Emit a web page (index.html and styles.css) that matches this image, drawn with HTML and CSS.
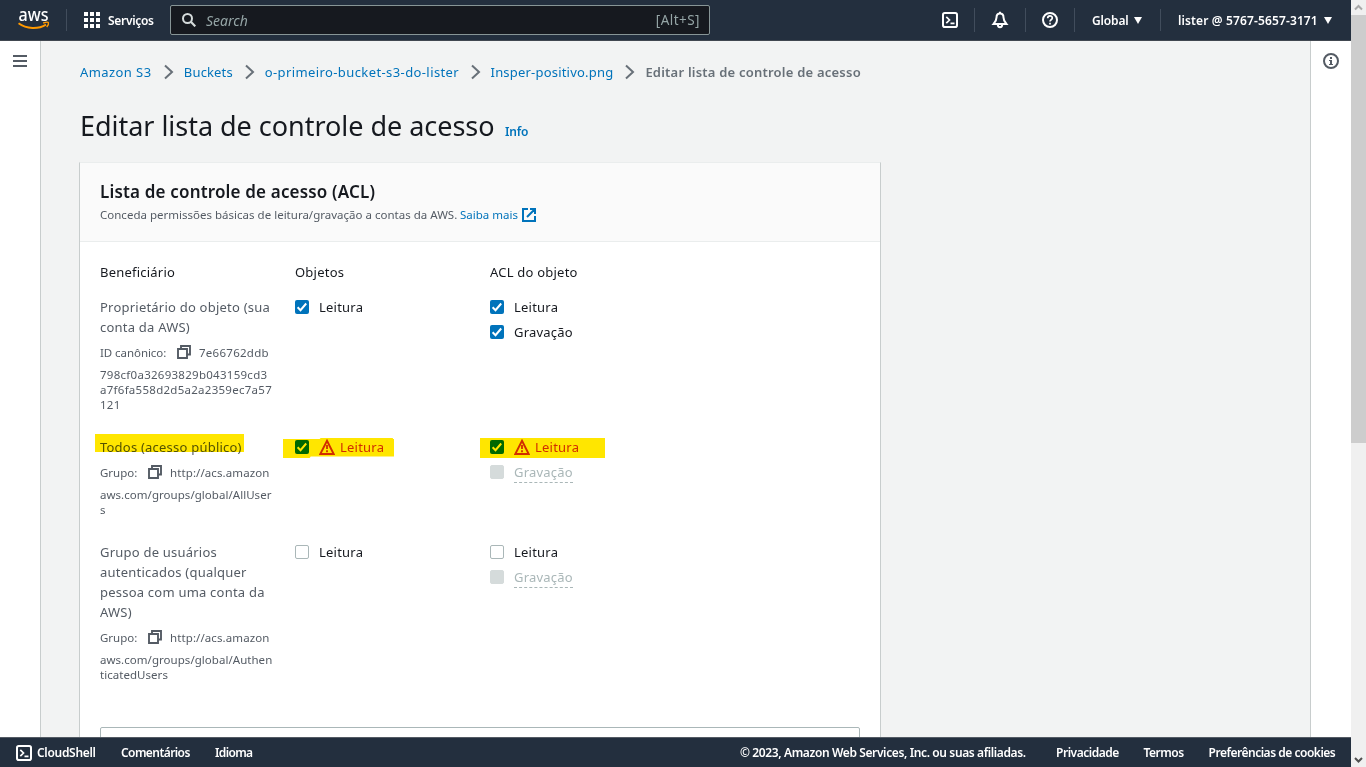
FILE: index.html
```html
<!DOCTYPE html>
<html lang="pt-BR">
<head>
<meta charset="utf-8">
<title>Editar lista de controle de acesso</title>
<link rel="stylesheet" href="styles.css">
</head>
<body>
<svg class="defs" width="0" height="0">
  <symbol id="copy" viewBox="0 0 14 14"><path d="M1 4h9v9H1zM4 4V1h9v8.500h-3" fill="none" stroke="currentColor" stroke-width="1.900"/></symbol>
  <symbol id="check" viewBox="0 0 14 14"><path d="M2.600 7.300l2.900 2.900L11.200 3.500" fill="none" stroke="currentColor" stroke-width="2"/></symbol>
  <symbol id="warn" viewBox="0 0 16 16"><path d="M8 1.800L14.700 15H1.300z" fill="none" stroke="currentColor" stroke-width="1.900"/><path d="M8 6v4M8 11.300v2" stroke="currentColor" stroke-width="1.800"/></symbol>
  <symbol id="chev" viewBox="0 0 10 16"><path d="M1 1.500L8 8 1 14.500" fill="none" stroke="currentColor" stroke-width="2"/></symbol>
  <symbol id="shell" viewBox="0 0 16 16"><rect x="1" y="1" width="14" height="14" rx="1.800" fill="none" stroke="currentColor" stroke-width="2"/><path d="M4.300 4.800L7.500 8l-3.200 3.200M8.500 11.300h4" fill="none" stroke="currentColor" stroke-width="1.700"/></symbol>
</svg>
<div class="window">
  <div class="console">
    <header class="topbar">
      <svg class="logo" viewBox="0 0 32 40"><text x="0.500" y="21" textLength="30" lengthAdjust="spacingAndGlyphs" class="logo-text">aws</text><path d="M.500 23.300c8 6 20 6 27.500 1.300" fill="none" stroke="#f90" stroke-width="1.900"/><path d="M25.200 23c3-.9 5-.8 5.200-.2.300.9-.400 2.800-1.700 4.200" fill="none" stroke="#f90" stroke-width="1.400"/></svg>
      <span class="divider d1"></span>
      <svg class="grid-icon" viewBox="0 0 16 16"><path d="M0 0h4v4H0zM6 0h4v4H6zM12 0h4v4h-4zM0 6h4v4H0zM6 6h4v4H6zM12 6h4v4h-4zM0 12h4v4H0zM6 12h4v4H6zM12 12h4v4h-4z" fill="#fff"/></svg>
      <span class="services">Serviços</span>
      <div class="search">
        <svg class="search-icon" viewBox="0 0 14 14"><circle cx="5.500" cy="5.500" r="4.500" fill="none" stroke="#d5dbdb" stroke-width="2"/><path d="M8.800 8.800L13.300 13.300" stroke="#d5dbdb" stroke-width="2.200"/></svg>
        <em class="search-text">Search</em><span class="shortcut">[Alt+S]</span>
      </div>
      <div class="tools">
        <svg class="tool"><use href="#shell"/></svg>
        <span class="divider"></span>
        <svg class="tool bell" viewBox="0 0 18 18"><path d="M9 2.500C6.500 2.500 5.500 4.500 5.500 6.500 5.500 9.500 4.500 10.500 2.500 13h13C13.500 10.500 12.500 9.500 12.500 6.500 12.500 4.500 11.500 2.500 9 2.500zM9 .800v1.700M6.800 13.500C6.800 17 11.200 17 11.200 13.500" fill="none" stroke="#fff" stroke-width="2"/></svg>
        <span class="divider"></span>
        <svg class="tool" viewBox="0 0 16 16"><circle cx="8" cy="8" r="7" fill="none" stroke="#fff" stroke-width="2"/><path d="M5.700 6.300C5.700 3 10.300 3.200 10.300 6 10.300 7.800 8 7.700 8 9.500M8 10.700v1.800" fill="none" stroke="#fff" stroke-width="1.700"/></svg>
        <span class="divider"></span>
      </div>
      <span class="region">Global</span><i class="caret"></i>
      <span class="divider d2"></span>
      <span class="account">lister @ 5767-5657-3171</span><i class="caret"></i>
    </header>
    <div class="workspace">
      <aside class="rail left"><svg class="menu" viewBox="0 0 14 12"><path d="M0 1h14M0 6h14M0 11h14" stroke="#545b64" stroke-width="2"/></svg></aside>
      <main class="content">
        <nav class="crumbs">
          <a class="c1">Amazon S3</a><svg class="sep"><use href="#chev"/></svg>
          <a class="c2">Buckets</a><svg class="sep"><use href="#chev"/></svg>
          <a class="c3">o-primeiro-bucket-s3-do-lister</a><svg class="sep"><use href="#chev"/></svg>
          <a class="c4">Insper-positivo.png</a><svg class="sep"><use href="#chev"/></svg>
          <b class="c5">Editar lista de controle de acesso</b>
        </nav>
        <div class="heading"><h1>Editar lista de controle de acesso</h1><a class="info">Info</a></div>
        <section class="card">
          <div class="card-head">
            <h2>Lista de controle de acesso (ACL)</h2>
            <p class="desc"><span class="desc-text">Conceda permissões básicas de leitura/gravação a contas da AWS.</span><a class="more">Saiba mais</a><svg class="ext" viewBox="0 0 14 14"><path d="M6 1H1v12h12V8M8 1h5v5M13 1L5 9" fill="none" stroke="#0073bb" stroke-width="2"/></svg></p>
          </div>
          <div class="card-body">
            <div class="row labels"><span>Beneficiário</span><span>Objetos</span><span>ACL do objeto</span></div>
            <div class="row">
              <div class="who"><div class="name">Proprietário do objeto (sua<br>conta da AWS)</div>
                <div class="copyline"><span class="canon">ID canônico:</span><svg class="copy"><use href="#copy"/></svg><span class="hex">7e66762ddb</span></div>
                <div class="rest hex">798cf0a32693829b043159cd3<br>a7f6fa558d2d5a2a2359ec7a57<br>121</div></div>
              <div class="perms"><label class="opt"><span class="box on"><svg><use href="#check"/></svg></span>Leitura</label></div>
              <div class="perms"><label class="opt"><span class="box on"><svg><use href="#check"/></svg></span>Leitura</label><label class="opt"><span class="box on"><svg><use href="#check"/></svg></span>Gravação</label></div>
            </div>
            <div class="row">
              <div class="who mark m1"><div class="name">Todos (acesso público)</div>
                <div class="copyline"><span class="group">Grupo:</span><svg class="copy"><use href="#copy"/></svg><span>http://acs.amazon</span></div>
                <div class="rest">aws.com/groups/global/AllUser<br>s</div></div>
              <div class="perms mark m2"><label class="opt danger"><span class="box on"><svg><use href="#check"/></svg></span><svg class="warn"><use href="#warn"/></svg>Leitura</label></div>
              <div class="perms mark m3"><label class="opt danger"><span class="box on"><svg><use href="#check"/></svg></span><svg class="warn"><use href="#warn"/></svg>Leitura</label><label class="opt off"><span class="box"></span><span class="hint">Gravação</span></label></div>
            </div>
            <div class="row">
              <div class="who"><div class="name">Grupo de usuários<br>autenticados (qualquer<br>pessoa com uma conta da<br>AWS)</div>
                <div class="copyline"><span class="group">Grupo:</span><svg class="copy"><use href="#copy"/></svg><span>http://acs.amazon</span></div>
                <div class="rest">aws.com/groups/global/Authen<br>ticatedUsers</div></div>
              <div class="perms"><label class="opt"><span class="box"></span>Leitura</label></div>
              <div class="perms"><label class="opt"><span class="box"></span>Leitura</label><label class="opt off"><span class="box"></span><span class="hint">Gravação</span></label></div>
            </div>
            <div class="alert"></div>
          </div>
        </section>
      </main>
      <aside class="rail right"><svg class="info-icon" viewBox="0 0 16 16"><circle cx="8" cy="8" r="7" fill="none" stroke="#545b64" stroke-width="2"/><path d="M7 4h2v2H7zM6 7h3v4h1v1H6v-1h1V8H6z" fill="#545b64"/></svg></aside>
    </div>
    <footer class="footer">
      <svg class="tool"><use href="#shell"/></svg><span class="f1">CloudShell</span><span class="f2">Comentários</span><span class="f3">Idioma</span>
      <span class="f4">© 2023, Amazon Web Services, Inc. ou suas afiliadas.</span><span class="f5">Privacidade</span><span class="f6">Termos</span><span class="f7">Preferências de cookies</span>
    </footer>
  </div>
  <div class="scrollbar"><svg class="arrow" viewBox="0 0 15 15"><path d="M4 9.500l3.500-3.500L11 9.500" fill="none" stroke="#a8a8a8" stroke-width="2"/></svg><div class="thumb"></div><svg class="arrow" viewBox="0 0 15 15"><path d="M4 6l3.500 3.500L11 6" fill="none" stroke="#505050" stroke-width="2"/></svg></div>
</div>
</body>
</html>
```
FILE: styles.css
```css
* { box-sizing: border-box; }
body { margin: 0; font-family: "Noto Sans", sans-serif; font-size: 13px; color: #16191f; }
svg { display: block; flex: none; }
a { color: #0073bb; }
.defs { position: absolute; }
.window { display: flex; width: 1366px; height: 767px; overflow: hidden; white-space: nowrap; }
.console { display: flex; flex-direction: column; width: 1351px; }

.topbar { display: flex; align-items: center; height: 41px; flex: none; padding-left: 18px; background: #232f3e; border-bottom: 1px solid #414750; color: #fff; font-size: 12px; font-weight: 600; }
.logo { width: 32px; height: 40px; }
.logo-text { font: 500 18px "Noto Sans", sans-serif; fill: #fff; }
.divider { width: 1px; height: 22px; background: #414d5c; flex: none; }
.d1 { margin: 0 17px 0 16px; }
.grid-icon { width: 16px; height: 16px; }
.services { width: 46px; margin: 0 16px 0 8px; letter-spacing: -.3px; }
.search { display: flex; align-items: center; width: 540px; height: 30px; padding: 0 9px 0 11px; background: #16191f; border: 1px solid #879596; border-radius: 2px; color: #95a5a6; font-size: 14px; font-weight: 400; }
.search-icon { width: 14px; height: 14px; }
.search-text { margin-left: 10px; }
.shortcut { margin-left: auto; font-size: 13.500px; letter-spacing: .45px; }
.tools { display: flex; align-items: center; gap: 16px; margin-left: 232px; }
.tools .divider { height: 24px; }
.tool { width: 16px; height: 16px; color: #fff; }
.bell { width: 18px; height: 18px; }
.region { margin-left: 17px; width: 36px; letter-spacing: -.15px; }
.caret { margin-left: 6px; border: 4px solid transparent; border-top: 7px solid #fff; border-bottom: 0; }
.d2 { margin: 0 17px 0 18px; }
.account { width: 140px; letter-spacing: .13px; }

.workspace { display: flex; flex: 1; min-height: 0; overflow: hidden; background: #f2f3f3; }
.rail { width: 41px; flex: none; background: #fff; }
.left { padding: 14px 13px; border-right: 1px solid #c8cdcd; }
.right { padding: 12px; border-left: 1px solid #c8cdcd; }
.menu { width: 14px; height: 12px; }
.info-icon { width: 16px; height: 16px; }
.content { flex: 1; padding: 21px 0 0 39px; overflow: hidden; }
.crumbs { display: flex; align-items: center; height: 20px; }
.crumbs a, .crumbs b { flex: none; }
.sep { width: 10px; height: 16px; margin: 0 10px 0 11.850px; color: #687078; }
.c1 { width: 72px; letter-spacing: .42px; }
.c2 { width: 49px; letter-spacing: .15px; }
.c3 { width: 194px; letter-spacing: .4px; }
.c4 { width: 123px; letter-spacing: .2px; }
.c5 { color: #687078; font-weight: 600; letter-spacing: .22px; }
.heading { display: flex; align-items: baseline; height: 40px; margin-top: 24px; }
h1 { width: 415px; margin: 0; font-size: 27px; font-weight: 400; line-height: 40px; letter-spacing: -.03px; }
.info { margin-left: 10px; font-size: 12px; font-weight: 600; letter-spacing: -.2px; }

.card { width: 802px; margin: 16px 0 0 -1px; background: #fff; border: 1px solid #c8cdcd; border-top-color: #eaeded; }
.card-head { height: 79px; padding: 17px 20px; background: #fafafa; border-bottom: 1px solid #eaeded; }
h2 { margin: 0; font-size: 17px; font-weight: 600; line-height: 24px; letter-spacing: .17px; }
.desc { display: flex; align-items: center; height: 20px; margin: 1px 0 0; color: #545b64; font-size: 11.500px; letter-spacing: .01px; }
.desc-text { width: 360px; padding-bottom: 2px; }
.more { width: 58px; padding-bottom: 2px; }
.ext { width: 14px; height: 14px; margin-left: 4px; }
.card-body { padding: 20px; letter-spacing: .22px; }
.row { display: grid; grid-template-columns: 195px 195px 195px; margin-bottom: 25px; line-height: 20px; }
.labels { margin-bottom: 15px; }
.name { color: #545b64; }
.copyline { display: flex; align-items: center; height: 30px; color: #545b64; font-size: 11.500px; letter-spacing: .1px; }
.copyline span { padding-top: 1px; }
.canon { width: 66px; letter-spacing: -.06px; }
.group { width: 37px; letter-spacing: 0; }
.copy { width: 14px; height: 14px; margin: 0 8px 0 11px; }
.rest { color: #545b64; font-size: 11.500px; line-height: 15px; letter-spacing: .04px; }
.hex { letter-spacing: .27px; }
.opt { display: flex; align-items: center; height: 20px; margin-bottom: 5px; }
.box { width: 14px; height: 14px; margin-right: 10px; border: 1px solid #aab7b8; border-radius: 2px; background: #fff; }
.box svg { width: 14px; height: 14px; }
.on { border: 0; background: #0073bb; color: #fff; }
.warn { width: 16px; height: 16px; margin-right: 5px; }
.danger { color: #d13212; }
.off { color: #aab7b8; }
.off .box { border-color: #d5dbdb; background: #d5dbdb; }
.hint { height: 21px; border-bottom: 1px dashed #aab7b8; }
.mark { position: relative; }
.mark::after { content: ""; position: absolute; background: #ffe600; mix-blend-mode: multiply; }
.m1::after { left: -5px; top: -3px; width: 149px; height: 18px; }
.m2::after { left: -12px; top: 1px; width: 111px; height: 20px; clip-path: polygon(0 5%, 33% 5%, 34% 0, 99% 0, 99% 5%, 100% 5%, 100% 92%, 25% 93%, 24% 100%, 0 100%); }
.m3::after { left: -10px; top: 1px; width: 125px; height: 20px; }
.alert { height: 80px; margin-top: 45px; border: 1px solid #aab7b8; border-radius: 2px; }

.footer { display: flex; align-items: center; height: 30px; flex: none; padding-left: 16px; background: #232f3e; border-top: 1px solid #545b64; color: #fff; font-size: 12px; font-weight: 600; letter-spacing: -.38px; }
.footer span { flex: none; }
.f1 { width: 59px; margin-left: 5px; letter-spacing: -.3px; }
.f2 { width: 69px; margin-left: 25px; letter-spacing: -.57px; }
.f3 { width: 38px; margin-left: 25px; letter-spacing: -.65px; }
.f4 { width: 286px; margin-left: 487px; }
.f5 { width: 63px; margin-left: 30px; letter-spacing: -.48px; }
.f6 { width: 40px; margin-left: 24.500px; letter-spacing: -.5px; }
.f7 { width: 127px; margin-left: 25px; letter-spacing: -.48px; }

.scrollbar { display: flex; flex-direction: column; width: 15px; background: #f0f0f0; }
.thumb { height: 428px; margin-bottom: auto; background: #cdcdcd; }
.arrow { width: 15px; height: 15px; }
```
